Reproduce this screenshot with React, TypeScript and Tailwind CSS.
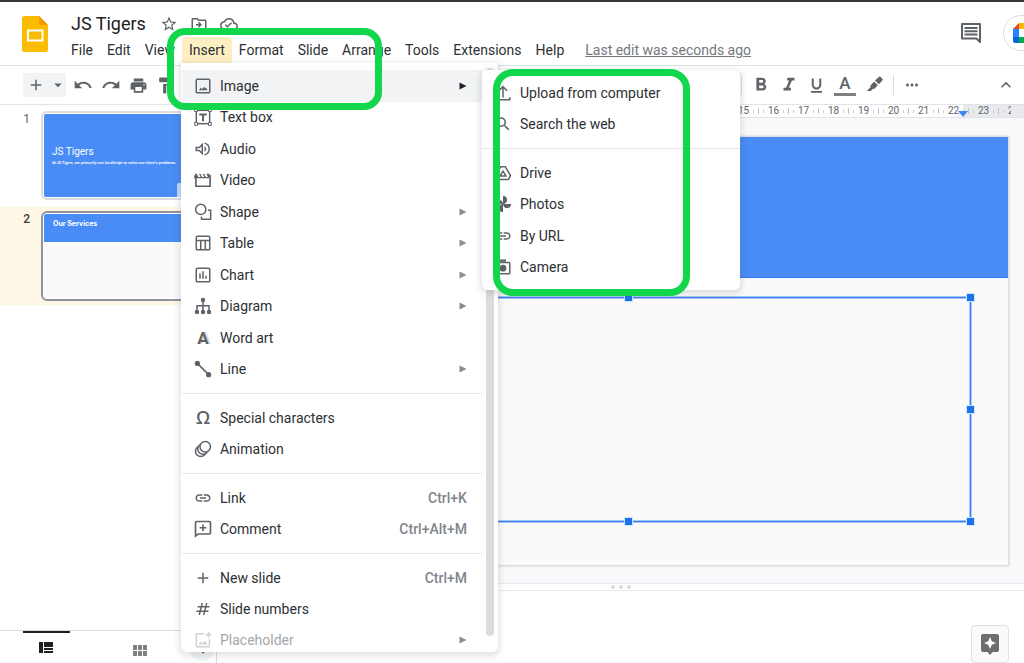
import type { ReactNode } from 'react'
import {
  MdAdd,
  MdArrowDropDown,
  MdExpandLess,
  MdFormatBold,
  MdFormatItalic,
  MdFormatPaint,
  MdFormatUnderlined,
  MdLink,
  MdMoreHoriz,
  MdNumbers,
  MdOutlineCloudDone,
  MdOutlineDriveFileMove,
  MdPrint,
  MdRedo,
  MdSearch,
  MdStarBorder,
  MdUndo,
} from 'react-icons/md'

interface MenuEntry {
  label: string
  icon: ReactNode
  shortcut?: string
  submenu?: boolean
  active?: boolean
  disabled?: boolean
}

function Icon({ children, className = 'size-[18px]' }: { children: ReactNode; className?: string }) {
  return (
    <svg
      viewBox="0 0 24 24"
      fill="none"
      stroke="currentColor"
      strokeWidth="2"
      className={`shrink-0 ${className}`}
      aria-hidden="true"
    >
      {children}
    </svg>
  )
}

const imageIcon = (
  <Icon>
    <rect x="3" y="3" width="18" height="18" rx="1.5" />
    <path d="M6.5 17.5l2.5-3.5 1.8 2.2L13.500 13l1.600 2.200 1-1.200 1.900 3.500z" fill="currentColor" stroke="none" />
  </Icon>
)

const textBoxIcon = (
  <Icon className="size-5">
    <rect x="4" y="4" width="16" height="16" strokeWidth="1.8" />
    <path d="M7.500 9h9M12 9v8" strokeWidth="2.4" />
    <path
      d="M2 2h3.4v3.4H2zM18.6 2H22v3.4h-3.4zM2 18.6h3.4V22H2zM18.6 18.6H22V22h-3.4z"
      fill="#fff"
      strokeWidth="1.2"
    />
  </Icon>
)

const audioIcon = (
  <Icon>
    <path d="M3 10v4h4l4 4V6L7 10z" />
    <path d="M14 8.3c1.500.8 2.300 2.200 2.300 3.700s-.8 2.900-2.300 3.700z" fill="currentColor" stroke="none" />
    <path d="M14 4.200c3.600 1 6.200 4.100 6.200 7.800s-2.600 6.800-6.200 7.800" />
  </Icon>
)

const videoIcon = (
  <Icon className="size-5">
    <path d="M3.500 6v13.500h17V6" />
    <path d="M2.500 4.500h2l2 4h2.600l-2-4h1.800l2 4h2.600l-2-4h1.800l2 4h2.600l-2-4h4V10h-19z" fill="currentColor" stroke="none" />
  </Icon>
)

const shapeIcon = (
  <Icon>
    <circle cx="9" cy="8.500" r="6.800" />
    <path d="M18.500 9.500h3.700V21.500H10v-3.500" />
  </Icon>
)

const tableIcon = (
  <Icon>
    <rect x="3" y="3" width="18" height="18" rx="1.500" />
    <path d="M3 8.500h18M9 8.500V21M15 8.500V21" />
  </Icon>
)

const chartIcon = (
  <Icon>
    <rect x="3" y="3" width="18" height="18" rx="1.500" />
    <path d="M8 17v-7M12 17V7M16 17v-4" />
  </Icon>
)

const diagramIcon = (
  <Icon>
    <path d="M12 4v16M4 20v-8.500h16V20" />
    <g fill="currentColor" stroke="none">
      <circle cx="12" cy="4" r="3" />
      <circle cx="4" cy="20" r="3" />
      <circle cx="12" cy="20" r="3" />
      <circle cx="20" cy="20" r="3" />
    </g>
  </Icon>
)

const lineIcon = (
  <Icon>
    <path d="M4.500 4.500l15 15" />
    <g fill="currentColor" stroke="none">
      <circle cx="4.500" cy="4.500" r="3.500" />
      <circle cx="19.500" cy="19.500" r="3.500" />
    </g>
  </Icon>
)

const animationIcon = (
  <Icon>
    <g fill="#fff">
      <circle cx="9" cy="15" r="7" />
      <circle cx="12" cy="12" r="7" />
      <circle cx="15" cy="9" r="7" />
    </g>
  </Icon>
)

const commentIcon = (
  <Icon className="size-5">
    <path d="M3 20.500V4.500Q3 3 4.500 3h15Q21 3 21 4.500v12q0 1.500-1.500 1.500H6z" />
    <path d="M12 6.500v8M8 10.500h8" />
  </Icon>
)

const placeholderIcon = (
  <Icon>
    <path d="M13 3.500H4.500Q3 3.500 3 5v14.500Q3 21 4.500 21H19q1.500 0 1.500-1.500V11" />
    <path d="M19.500 1v8M15.500 5h8" />
    <path d="M6 18l3-4 2.200 2.600 2.900-3.700L18 18z" fill="currentColor" stroke="none" />
  </Icon>
)

const wordArtIcon = (
  <span className="text-[17px] font-bold [text-shadow:2px_0_#dadce0]" aria-hidden="true">
    A
  </span>
)

const omegaIcon = (
  <span className="font-['Open_Sans'] text-[18px] font-semibold" aria-hidden="true">
    Ω
  </span>
)

const uploadIcon = (
  <Icon>
    <path d="M12 18V4M6.500 9L12 3.500 17.500 9M3 17.500V21h18v-3.500" />
  </Icon>
)

const driveIcon = (
  <Icon>
    <path d="M9 3.500h6l7 12-2.800 5H4.800L2 15.500z" />
    <path d="M12 9.500l4 6.500H8z" />
  </Icon>
)

const photosIcon = (
  <Icon>
    <g fill="currentColor" stroke="none">
      <path d="M12 12V1a5.500 5.500 0 0 1 0 11z" />
      <path d="M12 12h11a5.500 5.500 0 0 1-11 0z" />
      <path d="M12 12v11a5.500 5.500 0 0 1 0-11z" />
      <path d="M12 12H1a5.500 5.500 0 0 1 11 0z" />
    </g>
  </Icon>
)

const cameraIcon = (
  <Icon>
    <rect x="3" y="6" width="18" height="15" rx="1" />
    <path d="M7 3.500h9" strokeWidth="3" />
    <circle cx="12" cy="13.500" r="4.500" fill="currentColor" stroke="none" />
  </Icon>
)

const insertGroups: MenuEntry[][] = [
  [
    { label: 'Image', icon: imageIcon, submenu: true, active: true },
    { label: 'Text box', icon: textBoxIcon },
    { label: 'Audio', icon: audioIcon },
    { label: 'Video', icon: videoIcon },
    { label: 'Shape', icon: shapeIcon, submenu: true },
    { label: 'Table', icon: tableIcon, submenu: true },
    { label: 'Chart', icon: chartIcon, submenu: true },
    { label: 'Diagram', icon: diagramIcon, submenu: true },
    { label: 'Word art', icon: wordArtIcon },
    { label: 'Line', icon: lineIcon, submenu: true },
  ],
  [
    { label: 'Special characters', icon: omegaIcon },
    { label: 'Animation', icon: animationIcon },
  ],
  [
    { label: 'Link', icon: <MdLink size={20} />, shortcut: 'Ctrl+K' },
    { label: 'Comment', icon: commentIcon, shortcut: 'Ctrl+Alt+M' },
  ],
  [
    { label: 'New slide', icon: <MdAdd size={18} />, shortcut: 'Ctrl+M' },
    { label: 'Slide numbers', icon: <MdNumbers size={18} /> },
    { label: 'Placeholder', icon: placeholderIcon, submenu: true, disabled: true },
  ],
]

const imageGroups: MenuEntry[][] = [
  [
    { label: 'Upload from computer', icon: uploadIcon },
    { label: 'Search the web', icon: <MdSearch size={20} /> },
  ],
  [
    { label: 'Drive', icon: driveIcon },
    { label: 'Photos', icon: photosIcon },
    { label: 'By URL', icon: <MdLink size={20} /> },
    { label: 'Camera', icon: cameraIcon },
  ],
]

// rows share a fixed group height so they stay evenly spaced
const groupHeights: Record<number, string> = {
  2: 'h-[63px]',
  3: 'h-[94px]',
  4: 'h-[126px]',
  10: 'h-[315px]',
}

function MenuItem({ entry, className }: { entry: MenuEntry; className: string }) {
  return (
    <button
      type="button"
      role="menuitem"
      disabled={entry.disabled}
      className={`flex w-full items-center text-left text-sm ${className} ${
        entry.active ? 'bg-[#f1f3f4]' : ''
      } ${entry.disabled ? 'text-[#a3a7ab]' : 'text-[#2d3034]'}`}
    >
      <span
        className={`mr-2 flex w-[18px] shrink-0 items-center justify-center ${
          entry.disabled ? 'text-[#cfd1d4]' : 'text-[#5f6368]'
        }`}
      >
        {entry.icon}
      </span>
      <span className="flex-1 whitespace-nowrap">{entry.label}</span>
      {entry.shortcut && <span className="font-medium text-[#80868b]">{entry.shortcut}</span>}
      {entry.submenu && (
        <svg
          viewBox="0 0 8 8"
          className={`size-2 ${entry.active ? 'fill-[#202124]' : 'fill-[#8b8b8b]'}`}
          aria-hidden="true"
        >
          <path d="M0.500 0.500L7.500 4L0.500 7.500z" />
        </svg>
      )}
    </button>
  )
}

function MenuGroups({ groups, itemClass }: { groups: MenuEntry[][]; itemClass: string }) {
  return (
    <>
      {groups.map((group, i) => (
        <div key={i}>
          {i > 0 && <hr className="my-2 border-[#e3e5e8]" />}
          <div className={`grid auto-rows-fr ${groupHeights[group.length]}`}>
            {group.map((entry) => (
              <MenuItem key={entry.label} entry={entry} className={itemClass} />
            ))}
          </div>
        </div>
      ))}
    </>
  )
}

function InsertMenu() {
  return (
    <div
      role="menu"
      aria-label="Insert"
      className="absolute top-full -left-px z-10 h-[589px] w-[317px] rounded-b-md bg-white shadow-[0_2px_6px_2px_rgba(60,64,67,0.15)]"
    >
      <div className="flex h-full overflow-hidden">
        <div className="w-[301px] pt-[7px] pl-px">
          <MenuGroups groups={insertGroups} itemClass="pr-[15px] pl-3" />
        </div>
        <div className="mt-[5px] ml-1 h-[568px] w-2 rounded-full bg-[#dadce0]" />
      </div>
      <div
        role="menu"
        aria-label="Image"
        className="absolute top-[7px] left-[301px] w-[258px] rounded-md bg-white py-[7px] shadow-[0_2px_6px_2px_rgba(60,64,67,0.15)]"
      >
        <MenuGroups groups={imageGroups} itemClass="pl-3" />
      </div>
    </div>
  )
}

function Header() {
  return (
    <header className="flex h-[66px] border-t-2 border-b border-t-[#39353c] border-b-[#e1e3e6] bg-white">
      <svg viewBox="0 0 26 36" className="mt-3.5 ml-[22px] h-9 w-[26px] shrink-0" aria-label="Slides">
        <path d="M2.500 0H17l9 9v24.500a2.500 2.500 0 0 1-2.500 2.500h-21A2.500 2.500 0 0 1 0 33.500v-31A2.500 2.500 0 0 1 2.500 0z" fill="#fbbc04" />
        <path d="M17 0l9 9h-9z" fill="#f29900" />
        <rect x="6" y="14.500" width="14.500" height="10" fill="none" stroke="#fff" strokeWidth="2" />
      </svg>
      <div className="ml-4 pt-2">
        <div className="flex h-[27px] items-center pl-[7px] text-[#5f6368]">
          <h1 className="text-lg leading-6 text-[#202124]">JS Tigers</h1>
          <button type="button" aria-label="Star" className="ml-3.5">
            <MdStarBorder size={18} />
          </button>
          <button type="button" aria-label="Move" className="ml-3">
            <MdOutlineDriveFileMove size={18} />
          </button>
          <button type="button" aria-label="Saved to Drive" className="ml-3">
            <MdOutlineCloudDone size={18} />
          </button>
        </div>
        <nav className="flex h-[26px] items-center text-sm whitespace-nowrap text-[#2d3034]">
          <button type="button" className="px-[7px]">File</button>
          <button type="button" className="px-[7px]">Edit</button>
          <button type="button" className="px-[7px]">View</button>
          <div className="relative">
            <button type="button" aria-haspopup="menu" className="h-[26px] rounded-t-sm bg-[#feefc3] px-[7px]">
              Insert
            </button>
            <InsertMenu />
          </div>
          <button type="button" className="px-[7px]">Format</button>
          <button type="button" className="px-[7px]">Slide</button>
          <button type="button" className="px-[7px]">Arrange</button>
          <button type="button" className="px-[7px]">Tools</button>
          <button type="button" className="px-[7px]">Extensions</button>
          <button type="button" className="px-[7px]">Help</button>
          <a href="#history" className="ml-3.5 text-[#74787d] underline">
            Last edit was seconds ago
          </a>
        </nav>
      </div>
      <div className="ml-auto flex shrink-0 items-start">
        <button type="button" aria-label="Open comment history" className="mt-[19px] text-[#5f6368]">
          <Icon className="size-6">
            <path d="M3 3h18v18l-3.500-3.500H3z" strokeLinejoin="round" />
            <path d="M5.500 7h13M5.500 10.200h13M5.500 13.400h13" />
          </Icon>
        </button>
        <div className="ml-5 w-[21px]">
          <button
            type="button"
            aria-label="Join a call"
            className="mt-[13px] flex h-9 w-20 items-center rounded-full border border-[#dadce0] pl-[9px]"
          >
            <svg viewBox="0 0 24 20" className="h-5 w-6" aria-hidden="true">
              <path d="M0 6h6V0z" fill="#ea4335" />
              <path d="M0 6h6v8H0z" fill="#2684fc" />
              <path d="M0 14h6v6H2a2 2 0 0 1-2-2z" fill="#0066da" />
              <path d="M6 0h10a2 2 0 0 1 2 2v5l-4 3V6H6z" fill="#ffba00" />
              <path d="M6 14h8v-4l4 3v5a2 2 0 0 1-2 2H6z" fill="#00ac47" />
            </svg>
          </button>
        </div>
      </div>
    </header>
  )
}

function Toolbar() {
  return (
    <div className="flex h-[39px] items-center border-b border-[#e1e3e6] bg-white pr-2 pl-[23px] text-[#5f6368]">
      <div className="flex h-6 w-[43px] items-center rounded-xs bg-[#f1f3f4]">
        <button type="button" aria-label="New slide" className="pl-1">
          <MdAdd size={18} />
        </button>
        <button type="button" aria-label="New slide with layout" className="pl-1">
          <MdArrowDropDown size={18} />
        </button>
      </div>
      <div className="ml-[7px] flex gap-2">
        <button type="button" aria-label="Undo"><MdUndo size={20} /></button>
        <button type="button" aria-label="Redo"><MdRedo size={20} /></button>
        <button type="button" aria-label="Print"><MdPrint size={19} /></button>
        <button type="button" aria-label="Paint format"><MdFormatPaint size={19} /></button>
      </div>
      <div className="ml-auto flex items-center">
        <div className="mr-2 h-6 w-10 rounded-sm border border-[#dadce0]" />
        <button type="button" aria-label="Bold"><MdFormatBold size={22} /></button>
        <button type="button" aria-label="Italic" className="ml-1.5"><MdFormatItalic size={22} /></button>
        <button type="button" aria-label="Underline" className="ml-[7px]"><MdFormatUnderlined size={19} /></button>
        <button
          type="button"
          aria-label="Text color"
          className="ml-2 w-[22px] border-b-[3px] border-[#808080] text-center text-[17px] leading-[19px] font-medium"
        >
          A
        </button>
        <button type="button" aria-label="Highlight color" className="ml-2.5">
          <Icon>
            <g fill="currentColor" stroke="none">
              <path d="M14.500 3.500l3-2.500q1-.8 2 .2l2.300 2.300q1 1 .2 2l-2.500 3-2.500 2.500-5-5z" />
              <path d="M10.800 7.200l5 5-4.300 4.300q-1.200 1-2.500.5L6.500 20H1l5-5q-.6-1.600.5-3z" />
            </g>
          </Icon>
        </button>
        <div className="ml-[9px] h-5 w-px bg-[#dadce0]" />
        <button type="button" aria-label="More" className="ml-[9px]"><MdMoreHoriz size={18} /></button>
        <button type="button" aria-label="Hide the menus" className="ml-[75px]"><MdExpandLess size={20} /></button>
      </div>
    </div>
  )
}

function Filmstrip() {
  return (
    <aside className="flex w-[217px] shrink-0 flex-col border-r border-[#dadce0] bg-white">
      <div className="flex-1 pt-1.5">
        <div className="flex h-24 items-start">
          <span className="w-[41px] pt-0.5 pr-[11px] text-right text-xs leading-none text-[#5f6368]">1</span>
          <div className="h-[89px] w-[154px] rounded-md border-2 border-[#dadce0] p-px">
            <div className="relative h-full rounded-xs bg-[#4a8cf5] pt-8 pl-2 text-white">
              <div className="text-[10px] leading-3">JS Tigers</div>
              <div className="mt-[3px] font-[Lato] text-[4px] leading-1 font-bold whitespace-nowrap">
                At JS Tigers, we primarily use JavaScript to solve our client's problems.
              </div>
              <div className="absolute right-0 bottom-0 h-3.5 w-[15px] rounded-tl-xs bg-[#c3d9fb]" />
            </div>
          </div>
        </div>
        <div className="flex h-[98px] items-start bg-[#fef7e6] pt-1">
          <span className="w-[41px] pt-0.5 pr-[11px] text-right text-xs leading-none font-medium text-[#3c4043]">2</span>
          <div className="h-[90px] w-[154px] rounded-md border-2 border-[#8f949a] bg-white p-px">
            <div className="h-full bg-[#fafafa]">
              <div className="h-7 rounded-t-xs bg-[#4a8cf5] pt-1.5 pl-[9px] font-[Inter] text-[7px] leading-[7px] font-bold text-white">
                Our Services
              </div>
            </div>
          </div>
        </div>
      </div>
      <div className="flex h-[33px] border-t border-[#dadce0] pl-[23px]">
        <button
          type="button"
          aria-label="Filmstrip view"
          className="flex w-[47px] justify-center border-t-2 border-[#202124] pr-0.5 pb-px"
        >
          <svg viewBox="0 0 14 11" className="my-auto h-[11px] w-3.5 fill-[#202124]" aria-hidden="true">
            <path d="M0 0h4v11H0zM5 0h9v5H5zM5 6h9v2H5zM5 9h9v2H5z" />
          </svg>
        </button>
        <button type="button" aria-label="Grid view" className="ml-[46px] flex w-12 justify-center pt-3.5">
          <svg viewBox="0 0 14 11" className="h-[11px] w-3.5 fill-[#808080]" aria-hidden="true">
            <path d="M0 0h4v5H0zM5 0h4v5H5zM10 0h4v5h-4zM0 6h4v5H0zM5 6h4v5H5zM10 6h4v5h-4z" />
          </svg>
        </button>
        <button
          type="button"
          aria-label="Hide filmstrip"
          className="mt-1.5 ml-[26px] flex size-6 items-center justify-center rounded-full bg-[#f1f3f4]"
        >
          <Icon className="size-3.5 text-[#5f6368]">
            <path d="M15 5l-7 7 7 7" strokeWidth="3" />
          </Icon>
        </button>
      </div>
    </aside>
  )
}

const rulerMarks = Array.from({ length: 24 }, (_, i) => i + 1)

function Ruler() {
  return (
    <div className="relative h-3 bg-linear-to-r from-white from-[calc(100%-61px)] to-[#e8eaed] to-[calc(100%-61px)] text-[10px] leading-3 text-[#5f6368]">
      <div className="mr-[13px] flex h-full overflow-hidden pl-[91px]">
        {rulerMarks.map((mark) => (
          <div key={mark} className="flex w-[30px] shrink-0 items-center justify-between">
            <span className="h-1.5 w-px bg-[#bdc1c6]" />
            <span className="h-[3px] w-px bg-[#c8cbcf]" />
            <span>{mark}</span>
            <span className="h-[3px] w-px bg-[#c8cbcf]" />
            <span />
          </div>
        ))}
      </div>
      <svg viewBox="0 0 10 6" className="absolute right-14 bottom-0 h-1.5 w-2.5 fill-[#4285f4]" aria-hidden="true">
        <path d="M0 0h10L5 6z" />
      </svg>
    </div>
  )
}

function Handle({ className }: { className: string }) {
  return <span className={`absolute size-[7px] bg-[#1a73e8] outline outline-[#d2e3fc] ${className}`} />
}

function Canvas() {
  return (
    <main className="flex min-w-0 flex-1 flex-col">
      <Ruler />
      <div className="flex flex-1 border-t border-[#e1e3e6] bg-[#f8f9fa] pt-[19px] pr-4 pb-[18px] pl-[30px]">
        <div className="relative flex flex-1 flex-col bg-[#fafafa] shadow-[0_0_2px_1px_rgba(60,64,67,0.22)]">
          <div className="h-[141px] border-b border-[#2f7bea] bg-[#4a8cf5]" />
          <div className="absolute top-[159px] right-9 bottom-[42px] left-9 border-3 border-[#a8c7fa]">
            <div className="absolute -inset-0.5 border border-[#3b7de8]" />
            <Handle className="-top-[5px] -left-[5px]" />
            <Handle className="-top-[5px] left-1/2 -ml-[3px]" />
            <Handle className="-top-[5px] -right-[5px]" />
            <Handle className="top-1/2 -left-[5px] -mt-1" />
            <Handle className="top-1/2 -right-[5px] -mt-1" />
            <Handle className="-bottom-[5px] -left-[5px]" />
            <Handle className="-bottom-[5px] left-1/2 -ml-[3px]" />
            <Handle className="-right-[5px] -bottom-[5px]" />
          </div>
        </div>
      </div>
      <div className="flex h-2 items-center justify-center gap-1 border-y border-[#e8eaed] bg-white">
        <span className="size-1 rounded-full bg-[#dadce0]" />
        <span className="size-1 rounded-full bg-[#dadce0]" />
        <span className="size-1 rounded-full bg-[#dadce0]" />
      </div>
      <div className="flex h-[72px] items-start justify-end bg-white pt-[34px] pr-[15px]">
        <button
          type="button"
          aria-label="Explore"
          className="flex size-[38px] items-center justify-center rounded-sm border border-[#dfe1e3] bg-[#fafafa]"
        >
          <svg viewBox="0 0 18 21" className="h-[21px] w-[18px]" aria-hidden="true">
            <path d="M2 0h14a2 2 0 0 1 2 2v14a2 2 0 0 1-2 2h-4.500L9 21l-2.500-3H2a2 2 0 0 1-2-2V2a2 2 0 0 1 2-2z" fill="#6e6e6e" />
            <path d="M9 3l1.800 4.200L15 9l-4.200 1.800L9 15l-1.800-4.200L3 9l4.200-1.800z" fill="#fff" />
          </svg>
        </button>
      </div>
    </main>
  )
}

export default function App() {
  return (
    <div className="relative flex h-screen flex-col overflow-hidden bg-white font-[Roboto,sans-serif]">
      <Header />
      <Toolbar />
      <div className="flex min-h-0 flex-1">
        <Filmstrip />
        <Canvas />
      </div>

      {/* Highlight boxes */}
      <div className="pointer-events-none absolute top-7 left-[167px] z-20 h-[82px] w-[215px] rounded-[18px] border-7 border-[#12d64c]" />
      <div className="pointer-events-none absolute top-[69px] left-[493px] z-20 h-[227px] w-[197px] rounded-[20px] border-7 border-[#12d64c]" />
    </div>
  )
}
